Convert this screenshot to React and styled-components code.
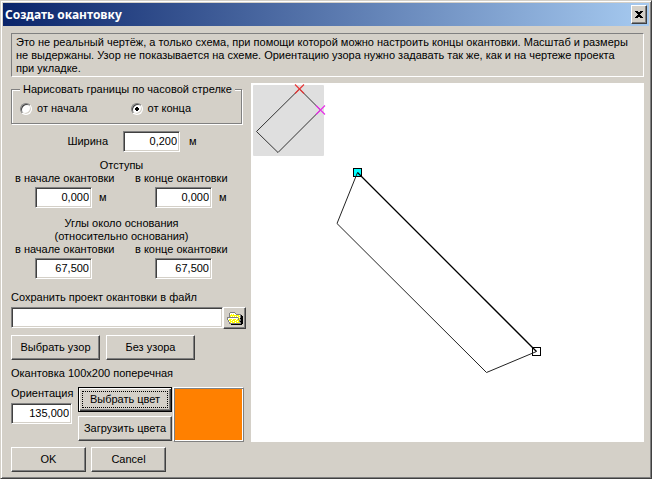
import React, { useState } from "react";
import styled, { createGlobalStyle, css } from "styled-components";

const face = "#d4d0c8";
const shadow = "#808080";
const dark = "#404040";

const GlobalStyle = createGlobalStyle`
  *, *::before, *::after { box-sizing: border-box; }
  html, body, #root { height: 100%; }
  body { margin: 0; background: ${face}; }
  body, button, input { font: 11px/13px "Liberation Sans", Arial, sans-serif; color: #000; }
`;

const raised = css`
  border: 1px solid;
  border-color: #fff ${dark} ${dark} #fff;
  box-shadow: inset -1px -1px 0 ${shadow};
`;

const Dialog = styled.form`
  min-height: 100%;
  display: flex;
  flex-direction: column;
  padding: 1px;
  background: ${face};
  border: 1px solid;
  border-color: ${face} ${dark} ${dark} ${face};
  box-shadow: inset 1px 1px 0 #fff, inset -1px -1px 0 ${shadow};
`;

const TitleBar = styled.header`
  display: flex;
  align-items: center;
  justify-content: space-between;
  height: 23px;
  margin: 1px 1px 0;
  padding: 0 2px;
  background: linear-gradient(to right, #0a246a, #a6caf0);
`;

const Title = styled.h1`
  margin: 0;
  color: #fff;
  font: bold 12px/16px "Noto Sans", Tahoma, sans-serif;
`;

const CloseButton = styled.button`
  display: grid;
  place-items: center;
  width: 16px;
  height: 19px;
  padding: 0;
  background: ${face};
  ${raised}
`;

const Body = styled.div`
  flex: 1;
  display: flex;
  flex-direction: column;
  padding: 7px 6px 5px 9px;
`;

const Notice = styled.p`
  margin: 0 0 6px;
  padding: 2px 10px 1px 4px;
  border: 1px solid;
  border-color: ${shadow} #fff #fff ${shadow};
`;

const Workspace = styled.div`
  flex: 1;
  display: grid;
  grid-template-columns: 235px 1fr;
  gap: 5px;
`;

const Settings = styled.div`
  display: flex;
  flex-direction: column;
`;

const Group = styled.fieldset`
  display: grid;
  grid-template-columns: 1fr 1fr;
  margin: 0 4px 0 0;
  padding: 6px 0 8px 8px;
  border: 1px solid ${shadow};
  box-shadow: inset 1px 1px 0 #fff, 1px 1px 0 #fff;
`;

const Legend = styled.legend`
  padding: 0 3px;
  background: ${face};
`;

const RadioLabel = styled.label`
  display: flex;
  align-items: center;
  gap: 5px;
`;

const Radio = styled.input`
  appearance: none;
  width: 12px;
  height: 12px;
  margin: 0;
  border: 1px solid;
  border-color: ${shadow} #fff #fff ${shadow};
  border-radius: 50%;
  background: #fff;
  box-shadow: inset 1px 1px 0 ${dark}, inset -1px -1px 0 ${face};
  &:checked {
    background: radial-gradient(circle, #000 2px, #fff 2px);
  }
`;

const WidthRow = styled.label`
  display: flex;
  align-items: center;
  justify-content: center;
  gap: 9px;
  margin: 7px 0 7px 7px;
  span:first-child { margin-right: 6px; }
`;

const NumberField = styled.input`
  width: ${(p) => (p.$wide ? "61px" : "57px")};
  height: 21px;
  padding: 0 2px 2px;
  text-align: right;
  background: #fff;
  border: 1px solid;
  border-color: ${shadow} #fff #fff ${shadow};
  box-shadow: inset 1px 1px 0 ${dark}, inset -1px -1px 0 ${face};
  outline: none;
`;

const Section = styled.section`
  margin-bottom: ${(p) => p.$gap};
`;

const Heading = styled.h2`
  margin: 0;
  padding-right: 14px;
  text-align: center;
  font: inherit;
`;

const Pair = styled.div`
  display: grid;
  grid-template-columns: 120px 1fr;
  padding-left: 4px;
`;

const PairField = styled.label`
  display: flex;
  flex-direction: column;
  gap: 2px;
  white-space: nowrap;
`;

const PairValue = styled.span`
  display: flex;
  align-items: center;
  gap: 7px;
  padding-left: 20px;
`;

const FileRow = styled.div`
  display: flex;
  margin: 3px 0 6px;
`;

const FileField = styled(NumberField)`
  flex: 1;
  min-width: 0;
  text-align: left;
`;

const Button = styled.button`
  display: grid;
  place-items: center;
  width: ${(p) => p.$width};
  height: 25px;
  padding: 0 0 1px;
  white-space: nowrap;
  background: ${face};
  ${raised}
  ${(p) =>
    p.$default &&
    css`
      border-color: #000;
      box-shadow: inset 1px 1px 0 #fff, inset -1px -1px 0 ${dark}, inset -2px -2px 0 ${shadow};
      outline: 1px dotted #000;
      outline-offset: -5px;
    `}
`;

const BrowseButton = styled(Button)`
  width: 23px;
  height: 22px;
  padding: 0;
`;

const ButtonRow = styled.div`
  display: flex;
  gap: 6px;
`;

const PatternName = styled.p`
  margin: 7px 0;
`;

const ColorRow = styled.div`
  display: grid;
  grid-template-columns: 61px 94px 1fr;
  column-gap: 6px;
  margin-right: 2px;
`;

const Orientation = styled.label`
  display: flex;
  flex-direction: column;
  gap: 3px;
  white-space: nowrap;
`;

const ColorButtons = styled.div`
  display: flex;
  flex-direction: column;
  gap: 4px;
`;

const Swatch = styled.div`
  margin-left: -5px;
  height: 55px;
  background: #ff8000;
  border: 1px solid;
  border-color: #fff ${shadow} ${shadow} #fff;
  box-shadow: inset 1px 1px 0 ${shadow}, inset -1px -1px 0 #fff;
`;

const Canvas = styled.svg`
  display: block;
  width: 100%;
  height: 100%;
  background: #fff;
`;

const Footer = styled.footer`
  display: flex;
  gap: 5px;
  margin-top: 5px;
`;

function CrossIcon() {
  return (
    <svg width="8" height="7" viewBox="0 0 8 7" shapeRendering="crispEdges" aria-hidden="true">
      <path d="M0 0h3v1h2V0h3v1H7v1H6v1H5v1h1v1h1v1h1v1H5V6H3v1H0V6h1V5h1V4h1V3H2V2H1V1H0z" />
    </svg>
  );
}

const folderPixels = [
  "...ggggg........",
  "..gwwwwwg.......",
  "..gwywywwggggg..",
  "..gyyyyyyyyywgk.",
  "..gywywywywyygkk",
  "gggggggggggywgkk",
  "gwwwwwwwwwwgykkk",
  "gwyyywyyywygygkk",
  ".gyywyyywyyyggkk",
  ".gwyyywyyywygkkk",
  "..gywyyywyyyygkk",
  "..ggggggggggggkk",
  "....kkkkkkkkkkk.",
];
const folderColors = { g: shadow, w: "#fff", y: "#ff0", k: "#000" };

function FolderIcon() {
  return (
    <svg width="16" height="13" viewBox="0 0 16 13" shapeRendering="crispEdges" aria-hidden="true">
      {folderPixels.flatMap((row, y) =>
        [...row].map((key, x) =>
          key === "." ? null : (
            <rect key={`${x}-${y}`} x={x} y={y} width="1" height="1" fill={folderColors[key]} />
          )
        )
      )}
    </svg>
  );
}

function Scheme() {
  return (
    <Canvas role="img" aria-label="Схема окантовки" fill="none">
      <rect x="2" y="2" width="71" height="71" rx="1" fill="#dfdfdf" />
      <path d="M48.5 6L69.5 27L27 69.5L5.5 48.5Z" stroke="#333" />
      <path d="M44 1.5l9 9M53 1.5l-9 9" stroke="#e83838" strokeWidth="1.2" />
      <path d="M65 22.5l9 9M74 22.5l-9 9" stroke="#e830e8" strokeWidth="1.2" />
      <rect x="102.5" y="85.5" width="8" height="8" fill="#0ff" stroke="#000" />
      <rect x="281.5" y="264.5" width="8" height="8" stroke="#000" />
      <path d="M285.5 268.5L235.5 289.5L86 140.5L106.5 89.5" stroke="#222" />
      <path d="M106.5 89.5L285.5 268.5" stroke="#000" strokeWidth="1.3" />
    </Canvas>
  );
}

function Measure({ label, initial, unit }) {
  const [value, setValue] = useState(initial);
  return (
    <PairField>
      {label}
      <PairValue>
        <NumberField value={value} onChange={(e) => setValue(e.target.value)} />
        {unit}
      </PairValue>
    </PairField>
  );
}

export default function App() {
  return (
    <>
      <GlobalStyle />
      <Dialog onSubmit={(e) => e.preventDefault()}>
        <TitleBar>
          <Title>Создать окантовку</Title>
          <CloseButton type="button" aria-label="Закрыть">
            <CrossIcon />
          </CloseButton>
        </TitleBar>
        <Body>
          <Notice>
            Это не реальный чертёж, а только схема, при помощи которой можно настроить концы окантовки.
            Масштаб и размеры не выдержаны. Узор не показывается на схеме. Ориентацию узора нужно задавать
            так же, как и на чертеже проекта при укладке.
          </Notice>
          <Workspace>
            <Settings>
              <Group>
                <Legend>Нарисовать границы по часовой стрелке</Legend>
                <RadioLabel>
                  <Radio type="radio" name="direction" />
                  от начала
                </RadioLabel>
                <RadioLabel>
                  <Radio type="radio" name="direction" defaultChecked />
                  от конца
                </RadioLabel>
              </Group>
              <WidthRow>
                <span>Ширина</span>
                <NumberField defaultValue="0,200" />
                <span>м</span>
              </WidthRow>
              <Section $gap="9px">
                <Heading>Отступы</Heading>
                <Pair>
                  <Measure label="в начале окантовки" initial="0,000" unit="м" />
                  <Measure label="в конце окантовки" initial="0,000" unit="м" />
                </Pair>
              </Section>
              <Section $gap="12px">
                <Heading>
                  Углы около основания
                  <br />
                  (относительно основания)
                </Heading>
                <Pair>
                  <Measure label="в начале окантовки" initial="67,500" />
                  <Measure label="в конце окантовки" initial="67,500" />
                </Pair>
              </Section>
              <label htmlFor="file">Сохранить проект окантовки в файл</label>
              <FileRow>
                <FileField id="file" />
                <BrowseButton type="button" aria-label="Обзор">
                  <FolderIcon />
                </BrowseButton>
              </FileRow>
              <ButtonRow>
                <Button type="button" $width="89px">Выбрать узор</Button>
                <Button type="button" $width="89px">Без узора</Button>
              </ButtonRow>
              <PatternName>Окантовка 100x200 поперечная</PatternName>
              <ColorRow>
                <Orientation>
                  Ориентация
                  <NumberField $wide defaultValue="135,000" />
                </Orientation>
                <ColorButtons>
                  <Button type="button" $width="94px" $default>Выбрать цвет</Button>
                  <Button type="button" $width="94px">Загрузить цвета</Button>
                </ColorButtons>
                <Swatch />
              </ColorRow>
            </Settings>
            <Scheme />
          </Workspace>
          <Footer>
            <Button type="submit" $width="75px">OK</Button>
            <Button type="button" $width="75px">Cancel</Button>
          </Footer>
        </Body>
      </Dialog>
    </>
  );
}
